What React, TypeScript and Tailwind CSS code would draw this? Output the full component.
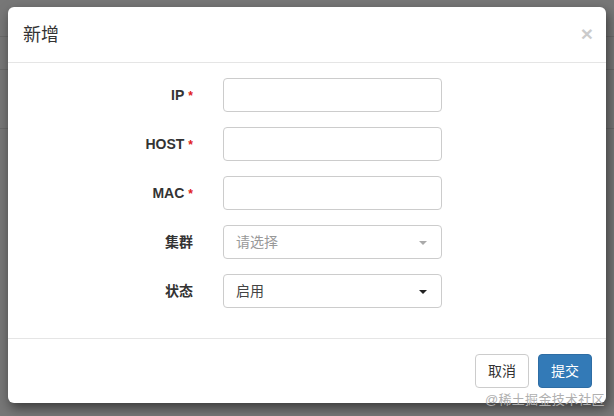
import React from "react";

const font = { fontFamily: '"Liberation Sans", Arial, "Noto Sans CJK SC", sans-serif' };

function Caret({ color }: { color: string }) {
  return (
    <svg width="8" height="4" viewBox="0 0 8 4" className="absolute right-[14px] top-[15px]">
      <path d="M0 0 L8 0 L4 4 Z" fill={color} />
    </svg>
  );
}

function Label({ text, required }: { text: string; required?: boolean }) {
  return (
    <div className="w-[200px] pr-[15px] text-right text-[14px] font-bold text-[#333] leading-[20px]">
      {text}
      {required && <span className="text-[#e02020] ml-[4px] text-[12px]">*</span>}
    </div>
  );
}

export default function App() {
  return (
    <div className="relative w-[614px] h-[416px] bg-[#777777] overflow-hidden" style={font}>
      <div className="flex flex-col">
        <div className="h-[37px] border-b border-[#6a6a6a]" />
        <div className="h-[33px] border-b border-[#6a6a6a]" />
        <div className="h-[59px] border-b border-[#6a6a6a]" />
      </div>
      <div className="absolute left-[8px] top-[7px] w-[598px] h-[396px] bg-white rounded-[6px] shadow-[2px_5px_12px_rgba(0,0,0,0.5)] flex flex-col">
        <div className="h-[56px] border-b border-[#e5e5e5] flex items-center justify-between pl-[15px] pr-[13px]">
          <div className="text-[18px] text-[#333] pt-[2px]">新增</div>
          <div className="text-[21px] font-bold text-black opacity-20 leading-none -mt-[2px]">×</div>
        </div>
        <div className="pt-[15px] pb-[30px] flex flex-col gap-[15px] border-b border-[#e5e5e5]">
          {[
            { t: "IP", r: true },
            { t: "HOST", r: true },
            { t: "MAC", r: true },
          ].map((f) => (
            <div key={f.t} className="flex items-center">
              <Label text={f.t} required={f.r} />
              <div className="ml-[15px] w-[219px] h-[34px] border border-[#ccc] rounded-[4px]" />
            </div>
          ))}
          <div className="flex items-center">
            <Label text="集群" />
            <div className="relative ml-[15px] w-[219px] h-[34px] border border-[#ccc] rounded-[4px] px-[12px] flex items-center text-[14px] text-[#999]">
              请选择
              <Caret color="#aaa" />
            </div>
          </div>
          <div className="flex items-center">
            <Label text="状态" />
            <div className="relative ml-[15px] w-[219px] h-[34px] border border-[#ccc] rounded-[4px] px-[12px] flex items-center text-[14px] text-[#444]">
              启用
              <Caret color="#222" />
            </div>
          </div>
        </div>
        <div className="flex justify-end gap-[9px] pt-[15px] pr-[14px]">
          <div className="w-[54px] h-[34px] border border-[#ccc] rounded-[4px] flex items-center justify-center text-[14px] text-[#333]">
            取消
          </div>
          <div className="w-[54px] h-[34px] bg-[#337ab7] border border-[#2e6da4] rounded-[4px] flex items-center justify-center text-[14px] text-white">
            提交
          </div>
        </div>
      </div>
      <div className="absolute left-[485px] top-[392px] text-[13px] leading-[16px] text-[#b0b0b0] tracking-[0.3px]">
        @稀土掘金技术社区
      </div>
    </div>
  );
}
